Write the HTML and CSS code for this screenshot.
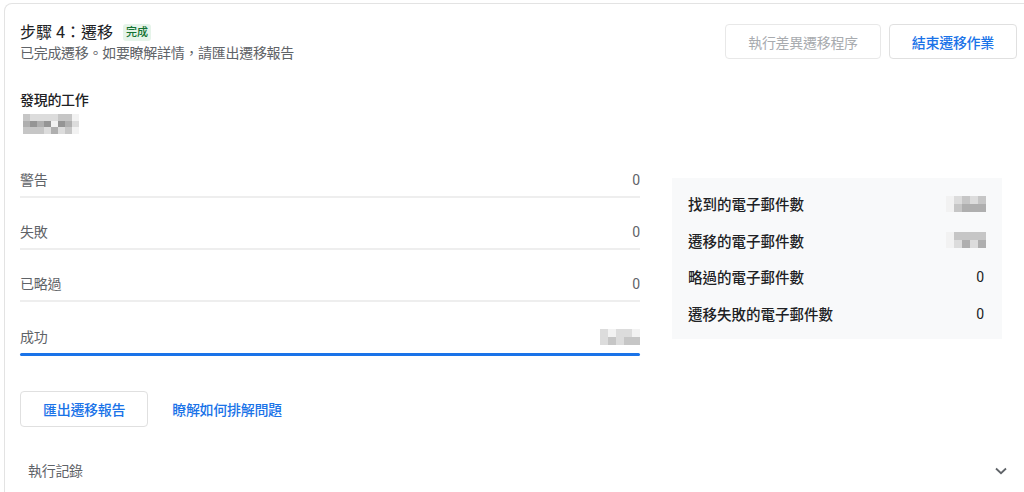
FILE: index.html
```html
<!DOCTYPE html>
<html lang="zh-Hant">
<head>
<meta charset="utf-8">
<title>步驟 4：遷移</title>
<link rel="stylesheet" href="styles.css">
</head>
<body>
<div class="card">
  <header class="head">
    <div class="head-text">
      <h1 class="title">步驟 4：遷移<span class="badge">完成</span></h1>
      <p class="sub">已完成遷移。如要瞭解詳情，請匯出遷移報告</p>
    </div>
    <div class="actions">
      <button class="btn btn-disabled" disabled>執行差異遷移程序</button>
      <button class="btn btn-primary">結束遷移作業</button>
    </div>
  </header>

  <section class="found">
    <h2 class="found-title">發現的工作</h2>
    <div class="mosaic mosaic-lg">
      <span class="c2"></span><span class="c1"></span><span class="c1"></span><span class="c1"></span><span class="c1"></span><span class="c2"></span><span class="c2"></span><span class="c0"></span>
      <span class="c3"></span><span class="c4"></span><span class="c3"></span><span class="c4"></span><span class="c0"></span><span class="c4"></span><span class="c3"></span><span class="c1"></span>
      <span class="c2"></span><span class="c2"></span><span class="c2"></span><span class="c1"></span><span class="c3"></span><span class="c1"></span><span class="c2"></span><span class="c0"></span>
    </div>
  </section>

  <div class="stats">
    <div class="rows">
      <div class="row"><span class="row-label">警告</span><span class="row-val">0</span></div>
      <div class="row"><span class="row-label">失敗</span><span class="row-val">0</span></div>
      <div class="row"><span class="row-label">已略過</span><span class="row-val">0</span></div>
      <div class="row row-success"><span class="row-label">成功</span>
        <span class="mosaic mosaic-sm">
          <span class="c1"></span><span class="c0"></span><span class="c1"></span><span class="c1"></span><span class="c0"></span>
          <span class="c1"></span><span class="c2"></span><span class="c1"></span><span class="c2"></span><span class="c2"></span>
        </span>
      </div>
    </div>
    <div class="panel">
      <div class="prow"><span>找到的電子郵件數</span>
        <span class="mosaic mosaic-sm">
          <span class="c0"></span><span class="c1"></span><span class="c2"></span><span class="c1"></span><span class="c2"></span>
          <span class="c0"></span><span class="c2"></span><span class="c3"></span><span class="c3"></span><span class="c3"></span>
        </span>
      </div>
      <div class="prow"><span>遷移的電子郵件數</span>
        <span class="mosaic mosaic-sm">
          <span class="c0"></span><span class="c2"></span><span class="c2"></span><span class="c2"></span><span class="c2"></span>
          <span class="c0"></span><span class="c1"></span><span class="c3"></span><span class="c1"></span><span class="c3"></span>
        </span>
      </div>
      <div class="prow"><span>略過的電子郵件數</span><span class="pval">0</span></div>
      <div class="prow"><span>遷移失敗的電子郵件數</span><span class="pval">0</span></div>
    </div>
  </div>

  <div class="links">
    <button class="btn btn-primary btn-export">匯出遷移報告</button>
    <a class="link" href="#">瞭解如何排解問題</a>
  </div>

  <div class="log">
    <span class="log-title">執行記錄</span>
    <svg class="chevron" width="12" height="8" viewBox="0 0 12 8" aria-hidden="true">
      <path d="M1 1.5 L6 6.2 L11 1.5" fill="none" stroke="#5f6368" stroke-width="1.8"/>
    </svg>
  </div>
</div>
</body>
</html>
```

FILE: styles.css
```css
html, body {
  margin: 0;
  padding: 0;
  overflow: hidden;
  background: #ffffff;
}

body {
  font-family: Roboto, "Noto Sans CJK TC", "Noto Sans", sans-serif;
  color: #202124;
  font-size: 14px;
}

.card {
  margin: 3px -9px 0 4px;
  border: 1px solid #e3e3e3;
  border-bottom: 0;
  border-radius: 8px 8px 0 0;
  padding: 20px 15px 0 15px;
  height: 489px;
  box-sizing: border-box;
}

.head {
  display: flex;
  justify-content: space-between;
  align-items: flex-start;
}

.title {
  margin: 0;
  font-size: 16px;
  line-height: 16px;
  font-weight: 400;
  display: flex;
  align-items: center;
  color: #202124;
}

.badge {
  margin-left: 10px;
  background: #e6f4ea;
  color: #137333;
  font-size: 11px;
  line-height: 17px;
  padding: 0 3px;
  border-radius: 3px;
  font-weight: 500;
}

.sub {
  margin: 2px 0 0;
  font-size: 14px;
  line-height: 20px;
  letter-spacing: -0.3px;
  color: #5f6368;
}

.actions {
  display: flex;
  gap: 8px;
}

.btn {
  font-family: inherit;
  font-size: 14px;
  letter-spacing: -0.3px;
  height: 35px;
  padding: 0 22px;
  background: #fff;
  border: 1px solid #e0e0e0;
  border-radius: 4px;
  cursor: pointer;
}

.btn-disabled {
  color: #a8abaf;
  border-color: #e8e8e8;
  cursor: default;
}

.btn-primary {
  color: #1a73e8;
  font-weight: 500;
}

.found {
  margin-top: 27px;
}

.found-title {
  margin: 0;
  font-size: 14px;
  line-height: 20px;
  font-weight: 500;
  letter-spacing: -0.3px;
}

.mosaic {
  display: grid;
  filter: blur(0.6px);
}

.mosaic span {
  display: block;
}

.mosaic-lg {
  margin: 4px 0 0 3px;
  grid-template-columns: repeat(8, 7px);
  grid-template-rows: repeat(3, 6.5px);
  width: 56px;
}

.mosaic-sm {
  grid-template-columns: repeat(5, 8px);
  grid-template-rows: repeat(2, 8px);
}

.c0 { background: #f2f2f2; }
.c1 { background: #dcdcdc; }
.c2 { background: #c6c6c6; }
.c3 { background: #afafaf; }
.c4 { background: #959595; }

.stats {
  margin-top: 12px;
  display: grid;
  grid-template-columns: 620px 330px;
  column-gap: 32px;
  align-items: start;
}

.row {
  padding-top: 24.3px;
  display: flex;
  justify-content: space-between;
  align-items: center;
  line-height: 20px;
  height: 20px;
  border-bottom: 2px solid #eeeeee;
  padding-bottom: 6px;
  box-sizing: content-box;
}

.row-label {
  color: #5f6368;
  letter-spacing: -0.3px;
}

.row-val {
  color: #5f6368;
}

.row-success {
  padding-bottom: 6px;
  border-bottom: 0;
  position: relative;
}

.row-success::after {
  content: "";
  position: absolute;
  left: 0;
  right: 0;
  bottom: -3px;
  height: 3px;
  border-radius: 2px;
  background: #1a73e8;
}

.panel {
  margin-top: 32px;
  background: #f8f9fa;
  padding: 8px 16px 7px 16px;
}

.prow {
  height: 36.6px;
  display: flex;
  justify-content: space-between;
  align-items: center;
  font-size: 14.5px;
  font-weight: 500;
  color: #202124;
}

.pval {
  font-weight: 400;
  font-size: 14px;
  margin-right: 2px;
}

.links {
  margin-top: 38px;
  display: flex;
  align-items: center;
  gap: 24px;
}

.btn-export {
  height: 36px;
  padding: 0 22px;
}

.link {
  color: #1a73e8;
  text-decoration: none;
  font-weight: 500;
  letter-spacing: -0.3px;
}

.log {
  margin-top: 34px;
  padding: 0 8px 0 8px;
  display: flex;
  justify-content: space-between;
  align-items: center;
  line-height: 20px;
}

.log-title {
  color: #5f6368;
  letter-spacing: -0.3px;
}

.chevron {
  display: block;
  margin-right: 2px;
}
```
